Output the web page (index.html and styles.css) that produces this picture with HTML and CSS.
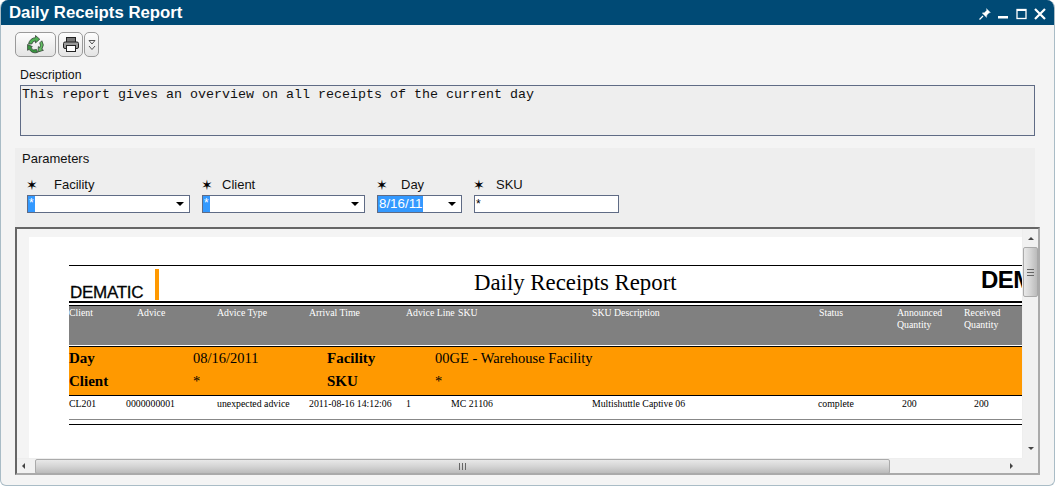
FILE: index.html
```html
<!DOCTYPE html>
<html lang="en">
<head>
    <meta charset="UTF-8">
    <title>Daily Receipts Report</title>
    <link rel="stylesheet" href="styles.css">
</head>

<body>
    <div class="window">
        <div class="titlebar">
            <span class="title">Daily Receipts Report</span>
            <div class="winbtns">
                <svg width="12" height="12" viewBox="0 0 12 12"><path d="M7.500 .5l4 4-1.500 .5-2 2-.5 2.500-4.500-4.500 2.500-.5 2-2z" fill="#fff" stroke="#9fb8c8" stroke-width=".5"/><path d="M4 8L.5 11.500" stroke="#fff" stroke-width="1.200"/></svg>
                <svg width="11" height="12" viewBox="0 0 11 12"><rect x="0" y="8" width="10" height="2.500" fill="#fff"/></svg>
                <svg width="11" height="12" viewBox="0 0 11 12"><rect x="1" y="1.500" width="9" height="9" fill="none" stroke="#fff" stroke-width="1.300"/><rect x="1" y="1" width="9" height="2" fill="#fff"/></svg>
                <svg width="12" height="12" viewBox="0 0 12 12"><path d="M1 1l10 10M11 1L1 11" stroke="#fff" stroke-width="2.200"/></svg>
            </div>
        </div>

        <div class="toolbar">
            <button class="tool tool-wide">
                <svg width="19" height="19" viewBox="0 0 18 18">
                    <path d="M2.500 8.500A6.800 6.800 0 0 1 9 2.500V.5l4 3.500-4 3.500v-2a4 4 0 0 0-3.500 3z" fill="#4fb053" stroke="#3a4a3c" stroke-width=".8"/>
                    <path d="M15 5.500a7 7 0 0 1 0 8l1.500 1-5 1.500.2-5 1.300 1a4 4 0 0 0 0-4.500z" fill="#63bf63" stroke="#3a4a3c" stroke-width=".8"/>
                    <path d="M11 16.500a7 7 0 0 1-8-3l-1.500 1L1.500 9l4.500 2-1.300 1a4 4 0 0 0 5.300 1.700z" fill="#38963f" stroke="#3a4a3c" stroke-width=".8"/>
                </svg>
            </button>
            <button class="tool tool-print">
                <svg width="16" height="15" viewBox="0 0 16 15">
                    <rect x="3.500" y=".5" width="9" height="5" fill="#777" stroke="#222"/>
                    <rect x=".5" y="5" width="15" height="6.500" rx="1.500" fill="#999" stroke="#222"/>
                    <rect x="3.500" y="8.500" width="9" height="6" fill="#fff" stroke="#222"/>
                </svg>
            </button>
            <button class="tool tool-more">
                <svg width="8" height="12" viewBox="0 0 8 12"><path d="M1 1.500h6L4 5zM1 7l3 3.500L7 7" fill="none" stroke="#555"/></svg>
            </button>
        </div>

        <div class="description">
            <div class="desc-label">Description</div>
            <div class="desc-box">This report gives an overview on all receipts of the current day</div>
        </div>

        <div class="params">
            <div class="params-title">Parameters</div>
            <div class="fields">
                <div class="field field-facility">
                    <div class="field-label"><span class="req">&#10038;</span><span class="name">Facility</span></div>
                    <div class="combo"><span class="sel">*</span><span class="caret"></span></div>
                </div>
                <div class="field field-client">
                    <div class="field-label"><span class="req">&#10038;</span><span class="name name-client">Client</span></div>
                    <div class="combo"><span class="sel">*</span><span class="caret"></span></div>
                </div>
                <div class="field field-day">
                    <div class="field-label"><span class="req">&#10038;</span><span class="name name-day">Day</span></div>
                    <div class="combo"><span class="sel sel-date">8/16/11</span><span class="caret"></span></div>
                </div>
                <div class="field field-sku">
                    <div class="field-label"><span class="req">&#10038;</span><span class="name name-sku">SKU</span></div>
                    <div class="combo plain">*</div>
                </div>
            </div>
        </div>

        <div class="viewer">
            <div class="viewport">
                <div class="page">
                    <div class="rep-head">
                        <div class="logo"><span class="logo-text">DEMATIC</span><span class="logo-bar"></span></div>
                        <div class="rep-title">Daily Receipts Report</div>
                        <div class="logo-right">DEMATIC</div>
                    </div>
                    <div class="cols cols-head">
                        <div>Client</div>
                        <div class="pad-advice">Advice</div>
                        <div>Advice Type</div>
                        <div>Arrival Time</div>
                        <div class="nowrap">Advice Line</div>
                        <div class="pad-sku">SKU</div>
                        <div>SKU Description</div>
                        <div class="pad-status">Status</div>
                        <div>Announced Quantity</div>
                        <div>Received Quantity</div>
                    </div>
                    <div class="group">
                        <b>Day</b><span>08/16/2011</span><b>Facility</b><span>00GE - Warehouse Facility</span>
                        <b>Client</b><span>*</span><b>SKU</b><span>*</span>
                    </div>
                    <div class="cols cols-row">
                        <div>CL201</div>
                        <div>0000000001</div>
                        <div>unexpected advice</div>
                        <div>2011-08-16 14:12:06</div>
                        <div>1</div>
                        <div>MC 21106</div>
                        <div>Multishuttle Captive 06</div>
                        <div>complete</div>
                        <div class="pad-qty1">200</div>
                        <div class="pad-qty2">200</div>
                    </div>
                    <div class="rep-foot"></div>
                </div>
            </div>
            <div class="vbar">
                <span class="arrow arrow-up"></span>
                <div class="vthumb"><span class="grip-h"></span></div>
                <span class="arrow arrow-down"></span>
            </div>
            <div class="hbar">
                <span class="arrow arrow-left"></span>
                <div class="hthumb"><span class="grip-v"></span></div>
                <span class="arrow arrow-right"></span>
            </div>
            <div class="corner"></div>
        </div>
    </div>
</body>

</html>
```

FILE: styles.css
```css
* {
    box-sizing: border-box;
}

body {
    margin: 0;
    background: #fff;
    font-family: 'Liberation Sans', Arial, sans-serif;
    overflow: hidden;
}

.window {
    width: 1055px;
    height: 486px;
    display: flex;
    flex-direction: column;
    background: #f4f4f4;
    border: 1px solid #a9bcc6;
    border-top: none;
    border-radius: 8px 8px 6px 6px;
    overflow: hidden;
}

.titlebar {
    height: 25px;
    flex: none;
    margin: 0 -1px;
    background: #004a75;
    color: #fff;
    display: flex;
    align-items: center;
    justify-content: space-between;
    padding: 0 9px 0 9px;
}

.title {
    font-size: 16.8px;
    font-weight: bold;
}

.winbtns {
    display: flex;
    gap: 7px;
    align-items: center;
    margin-top: 3px;
}

.toolbar {
    display: flex;
    padding: 7px 0 0 14px;
    height: 41px;
    flex: none;
}

.tool {
    height: 25px;
    padding: 0;
    margin-right: 1px;
    border: 1px solid #9a9a9a;
    border-radius: 5px;
    background: linear-gradient(to bottom, #fdfdfd, #e4e4e4);
    display: flex;
    align-items: center;
    justify-content: center;
}

.tool-wide {
    width: 41px;
    margin-right: 2px;
}

.tool-print {
    width: 25px;
}

.tool-more {
    width: 15px;
}

.description {
    padding: 0 19px;
    flex: none;
    height: 82px;
}

.desc-label {
    font-size: 12.3px;
    height: 19px;
    line-height: 16px;
    color: #111;
    padding-top: 1px;
}

.desc-box {
    height: 51px;
    background: #eee;
    border: 1px solid #5f6b85;
    font-family: 'Liberation Mono', monospace;
    font-size: 13.33px;
    line-height: 16px;
    padding: 1px 1px;
    color: #111;
}

.params {
    flex: none;
    height: 79px;
    margin: 0 19px 0 14px;
    background: #eee;
    padding: 4px 7px;
}

.params-title {
    font-size: 13px;
    line-height: 14px;
    color: #111;
    margin-bottom: 12px;
}

.fields {
    display: flex;
    margin-left: 5px;
}

.field-facility {
    width: 163px;
    margin-right: 12px;
}

.field-client {
    width: 163px;
    margin-right: 12px;
}

.field-day {
    width: 85px;
    margin-right: 12px;
}

.field-sku {
    width: 145px;
}

.field-label {
    display: flex;
    font-size: 13px;
    line-height: 14px;
    height: 17px;
    color: #111;
}

.req {
    width: 27px;
    font-size: 14px;
    font-weight: bold;
    font-family: 'DejaVu Sans', sans-serif;
    color: #000;
    text-indent: -1px;
}

.name-client {
    margin-left: -7px;
}

.name-day {
    margin-left: -3px;
}

.name-sku {
    margin-left: -5px;
}

.combo {
    height: 18px;
    background: #fff;
    border: 1px solid #5f6b85;
    display: flex;
    align-items: flex-start;
    justify-content: space-between;
    font-size: 12px;
}

.sel {
    background: #3399ff;
    color: #fff;
    height: 16px;
    line-height: 15px;
    padding: 0 1px;
    min-width: 7px;
}

.sel-date {
    width: 45px;
    font-size: 13.33px;
    line-height: 16px;
}

.caret {
    width: 0;
    height: 0;
    margin: 6px 5px 0 0;
    border-left: 4px solid transparent;
    border-right: 4px solid transparent;
    border-top: 4px solid #000;
}

.plain {
    padding: 0 1px;
    line-height: 16px;
    color: #000;
}

.viewer {
    flex: none;
    height: 248px;
    margin: 0 14px;
    border: 2px solid #666;
    border-right-color: #aaa;
    border-bottom-color: #aaa;
    background: #f4f4f4;
    display: grid;
    grid-template-columns: 1fr 16px;
    grid-template-rows: 1fr 15px;
}

.viewport {
    padding: 8px 0 0 12px;
    overflow: hidden;
    min-width: 0;
}

.page {
    background: #fff;
    height: 100%;
    padding: 28px 0 0 40px;
    color: #000;
    font-family: 'Liberation Serif', 'Times New Roman', serif;
}

.rep-head {
    height: 38px;
    border-top: 1px solid #000;
    border-bottom: 2px solid #000;
    display: flex;
    margin-bottom: 2px;
    overflow: hidden;
}

.logo {
    width: 380px;
    flex: none;
    display: flex;
    align-items: flex-end;
    padding-left: 1px;
}

.logo-text {
    font-family: 'Liberation Sans', sans-serif;
    font-size: 17px;
    line-height: 17px;
    letter-spacing: -.3px;
    width: 85px;
    -webkit-text-stroke: .3px #111;
}

.logo-bar {
    width: 4px;
    height: 31px;
    background: #ff9900;
    margin-bottom: 1px;
}

.rep-title {
    flex: none;
    font-size: 22.8px;
    line-height: 33px;
    padding-left: 25px;
    width: 532px;
}

.logo-right {
    flex: none;
    font-family: 'Liberation Sans', sans-serif;
    font-weight: bold;
    font-size: 24px;
    line-height: 26px;
    padding-top: 1px;
    white-space: nowrap;
    letter-spacing: -.5px;
}

.cols {
    display: grid;
    grid-template-columns: 57px 91px 92px 97px 45px 141px 226px 79px 67px 1fr;
    font-size: 9.8px;
    line-height: 12px;
}

.cols-head {
    height: 40px;
    border-top: 1px solid #000;
    background: #808080;
    color: #fff;
    padding-top: 1px;
}

.nowrap {
    white-space: nowrap;
}

.pad-advice {
    padding-left: 11px;
}

.pad-sku {
    padding-left: 7px;
}

.pad-status {
    padding-left: 1px;
}

.group {
    margin-top: 1px;
    height: 49px;
    border-top: 1px solid #000;
    background: #ff9900;
    display: grid;
    grid-template-columns: 124px 134px 108px 1fr;
    grid-template-rows: 23px 23px;
    font-size: 14.5px;
    line-height: 21px;
    padding-top: 1px;
}

.group b {
    font-size: 15px;
}

.cols-row {
    height: 24px;
    border-top: 1px solid #000;
    color: #000;
    padding-top: 2px;
    white-space: nowrap;
}

.pad-qty1 {
    padding-left: 5px;
}

.pad-qty2 {
    padding-left: 10px;
}

.rep-foot {
    height: 6px;
    border-top: 1px solid #888;
    border-bottom: 1px solid #000;
}

.vbar {
    background: #f1f1f1;
    display: flex;
    flex-direction: column;
    align-items: center;
    padding-top: 8px;
    border-left: 1px solid #eee;
}

.vthumb {
    width: 15px;
    height: 50px;
    margin-top: 7px;
    border: 1px solid #aaa;
    border-radius: 2px;
    background: linear-gradient(to right, #e8e8e8, #d4d4d4 50%, #bbb);
    display: flex;
    align-items: center;
    justify-content: center;
}

.grip-h {
    width: 7px;
    height: 7px;
    border-top: 1px solid #666;
    border-bottom: 1px solid #666;
    background: linear-gradient(#666, #666) center / 100% 1px no-repeat;
}

.hbar {
    background: #f1f1f1;
    display: flex;
    align-items: center;
    padding-left: 5px;
    border-top: 1px solid #eee;
}

.hthumb {
    width: 855px;
    height: 15px;
    margin-left: 10px;
    border: 1px solid #aaa;
    border-radius: 2px;
    background: linear-gradient(to bottom, #e8e8e8, #d4d4d4 50%, #bbb);
    display: flex;
    align-items: center;
    justify-content: center;
}

.grip-v {
    width: 7px;
    height: 7px;
    border-left: 1px solid #666;
    border-right: 1px solid #666;
    background: linear-gradient(#666, #666) center / 1px 100% no-repeat;
}

.arrow {
    width: 0;
    height: 0;
    flex: none;
}

.arrow-up {
    border-left: 3px solid transparent;
    border-right: 3px solid transparent;
    border-bottom: 3px solid #444;
}

.arrow-down {
    margin-top: auto;
    margin-bottom: 8px;
    border-left: 3px solid transparent;
    border-right: 3px solid transparent;
    border-top: 3px solid #444;
}

.arrow-left {
    border-top: 3px solid transparent;
    border-bottom: 3px solid transparent;
    border-right: 3px solid #444;
}

.arrow-right {
    margin-left: 120px;
    border-top: 3px solid transparent;
    border-bottom: 3px solid transparent;
    border-left: 3px solid #444;
}

.corner {
    background: #f1f1f1;
}
```
